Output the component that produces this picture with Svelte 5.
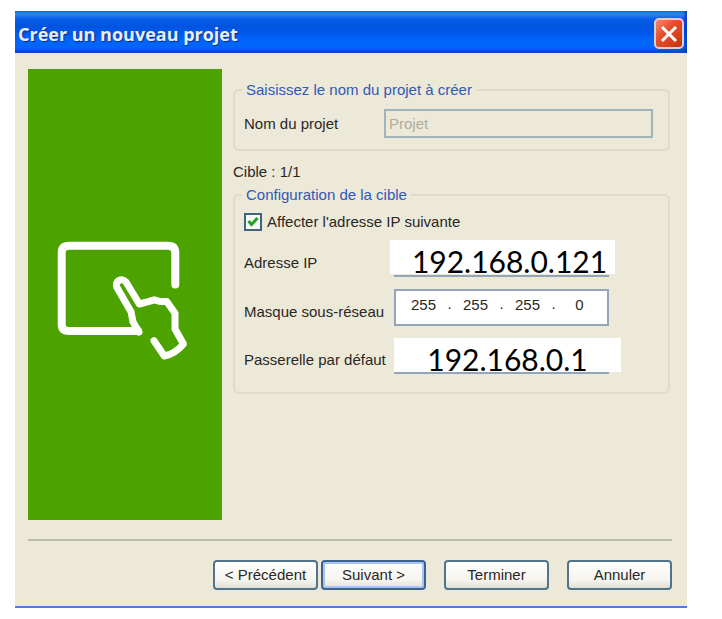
<script>
  let project = $state('Projet');
  let assign = $state(true);
  let address = $state('192.168.0.121');
  let gateway = $state('192.168.0.1');
  let mask = $state(['255', '255', '255', '0']);
</script>

<main class="page">
  <form class="dialog" onsubmit={(e) => e.preventDefault()}>
    <header class="titlebar">
      <h1>Créer un nouveau projet</h1>
      <button type="button" class="close" aria-label="Fermer">
        <svg viewBox="0 0 18 18" width="18" height="18" aria-hidden="true">
          <path d="M2 2 L16 16 M16 2 L2 16" fill="none" stroke="#fff" stroke-width="3" />
        </svg>
      </button>
    </header>

    <div class="content">
      <aside class="banner">
        <svg viewBox="0 0 136 120" width="136" height="120" aria-hidden="true">
          <g fill="none" stroke="#fff" stroke-linecap="round" stroke-linejoin="round">
            <path stroke-width="8" d="M118.300 43.500 V12 Q118.300 4.700 111 4.700 H12 Q4.700 4.700 4.700 12 V83 Q4.700 90 12 90 H81" />
            <path stroke-width="7" d="M82 91 L76 81 L74 70.700 L59.700 46 C57.500 40 65 36 69 41 L82.300 63 L91.300 60.700 L97.300 58.800 L103 60.500 L109.700 60.500 L118 72.300 L118 88 L126.500 103 Q118 113 107.300 115 L97 99.700" />
          </g>
        </svg>
      </aside>

      <div class="settings">
        <fieldset>
          <legend>Saisissez le nom du projet à créer</legend>
          <div class="project">
            <label for="project">Nom du projet</label>
            <input id="project" type="text" bind:value={project} disabled />
          </div>
        </fieldset>

        <p class="target">Cible : 1/1</p>

        <fieldset>
          <legend>Configuration de la cible</legend>
          <div class="config">
            <div class="check">
              <input id="assign" type="checkbox" bind:checked={assign} />
              <svg class="tick" viewBox="0 0 18 18" width="18" height="18" aria-hidden="true">
                <path d="M4.500 8 L7.500 11.500 L13.500 5" fill="none" stroke="#21a121" stroke-width="3" />
              </svg>
              <label for="assign">Affecter l'adresse IP suivante</label>
            </div>

            <div class="row">
              <label for="address">Adresse IP</label>
              <div class="field address"><input id="address" type="text" bind:value={address} /></div>
            </div>

            <div class="row">
              <label for="mask-0">Masque sous-réseau</label>
              <div class="field mask">
                {#each mask as _, i}
                  {#if i > 0}<span>.</span>{/if}
                  <input id="mask-{i}" type="text" aria-label="Masque, octet {i + 1}" bind:value={mask[i]} />
                {/each}
              </div>
            </div>

            <div class="row">
              <label for="gateway">Passerelle par défaut</label>
              <div class="field gateway"><input id="gateway" type="text" bind:value={gateway} /></div>
            </div>
          </div>
        </fieldset>
      </div>
    </div>

    <footer>
      <button type="button" class="btn">&lt; Précédent</button>
      <button type="submit" class="btn primary">Suivant &gt;</button>
      <button type="button" class="btn apart">Terminer</button>
      <button type="button" class="btn apart">Annuler</button>
    </footer>
  </form>
</main>

<style>
  :global(body) {
    margin: 0;
    background: #fff;
  }

  .page {
    padding: 11px 35px 11px 15px;
    font: 15px/18px 'Liberation Sans', Arial, sans-serif;
    color: #2b2725;
  }

  .dialog {
    background: #ece9d8;
    border-bottom: 2px solid #4a7be6;
  }

  .titlebar {
    display: flex;
    align-items: center;
    justify-content: space-between;
    box-sizing: border-box;
    height: 42px;
    padding: 3px 3px 0;
    background: linear-gradient(#1a6ae8 0, #2a86fa 3px, #0a5fe8 8px, #0054e0 15px, #0058ea 22px, #0066fc 30px, #0064fa 37px, #0046cc 41px, #2a5cc0 42px);
    box-shadow: inset -3px 0 3px -1px #0038c0;
  }

  h1 {
    margin: 0;
    font: 700 18px/24px 'Open Sans', 'Trebuchet MS', sans-serif;
    color: #e8eefc;
    text-shadow: 1px 1px 1px #0a2f90;
  }

  .close {
    display: grid;
    place-items: center;
    width: 30px;
    height: 31px;
    padding: 0;
    border: 2px solid #d3d0e4;
    border-radius: 5px;
    background: linear-gradient(135deg, #ee8a6c, #e2502c 40%, #d83f16 75%, #b83410);
  }

  .content {
    display: flex;
    gap: 11px;
    margin: 0 17px 0 13px;
    padding: 16px 0 19px;
  }

  .banner {
    display: flex;
    align-items: center;
    justify-content: center;
    flex: 0 0 194px;
    min-height: 451px;
    background: #4ca300;
  }

  .banner svg {
    margin-top: 12px;
  }

  .settings {
    flex: 1;
    min-width: 0;
    padding-top: 12px;
  }

  fieldset {
    min-width: 0;
    margin: 0;
    padding: 0 9px;
    border: 2px solid #dedbca;
    border-radius: 6px;
  }

  legend {
    margin-left: -2px;
    padding: 0 4px;
    color: #3159b8;
  }

  .project {
    display: grid;
    grid-template-columns: 140px 1fr;
    align-items: center;
    padding: 10px 6px 11px 0;
  }

  .project input {
    box-sizing: border-box;
    width: 100%;
    height: 29px;
    padding: 0 3px;
    border: 2px solid #9fb4bd;
    background: #ece9d8;
    color: #b0ac9d;
    font: inherit;
  }

  .target {
    margin: 12px 0 5px;
  }

  .config {
    display: grid;
    gap: 12px;
    padding: 8px 0 18px;
  }

  .check {
    position: relative;
    display: flex;
    align-items: center;
    gap: 5px;
    height: 20px;
    margin-bottom: -4px;
  }

  .check input {
    appearance: none;
    box-sizing: border-box;
    width: 18px;
    height: 18px;
    margin: 0;
    border: 2px solid #3d6580;
    background: #f8f8f4;
  }

  .tick {
    position: absolute;
    left: 0;
    pointer-events: none;
    visibility: hidden;
  }

  input:checked + .tick {
    visibility: visible;
  }

  .row {
    display: grid;
    grid-template-columns: 150px 215px;
    align-items: center;
  }

  .row label {
    padding-top: 8px;
  }

  .field {
    box-sizing: border-box;
    height: 37px;
    border: 0 solid #95a5b8;
  }

  .field input {
    box-sizing: border-box;
    padding: 0;
    border: 0;
    background: #fff;
    color: #000;
    text-align: center;
  }

  .address,
  .gateway {
    border-bottom-width: 2px;
  }

  .gateway {
    height: 36px;
  }

  .address input,
  .gateway input {
    display: block;
    height: 34px;
    padding-top: 8px;
    font: 30px/26px Lato, Carlito, Calibri, sans-serif;
  }

  .address input {
    width: 225px;
    margin-left: -4px;
    padding-left: 14px;
  }

  .gateway input {
    width: 227px;
  }

  .mask {
    display: flex;
    justify-content: center;
    padding-bottom: 6px;
    border-width: 2px;
    background: #fff;
  }

  .mask input {
    width: 36px;
    font: inherit;
    color: #2b2725;
  }

  .mask span {
    width: 16px;
    text-align: center;
    line-height: 26px;
  }

  footer {
    display: flex;
    justify-content: flex-end;
    gap: 3px;
    margin: 0 15px 0 13px;
    padding: 19px 0 16px;
    border-top: 2px solid #bdbcae;
  }

  .btn {
    width: 105px;
    height: 30px;
    padding: 0;
    border: 2px solid #50748c;
    border-radius: 4px;
    background: linear-gradient(#fff, #f5f4ee 70%, #e2dfd3);
    font: inherit;
    color: #2b2725;
  }

  .primary {
    border-color: #3c6090;
    box-shadow: inset 0 0 0 2px #a9c4f0;
  }

  .apart {
    margin-left: 15px;
  }
</style>
